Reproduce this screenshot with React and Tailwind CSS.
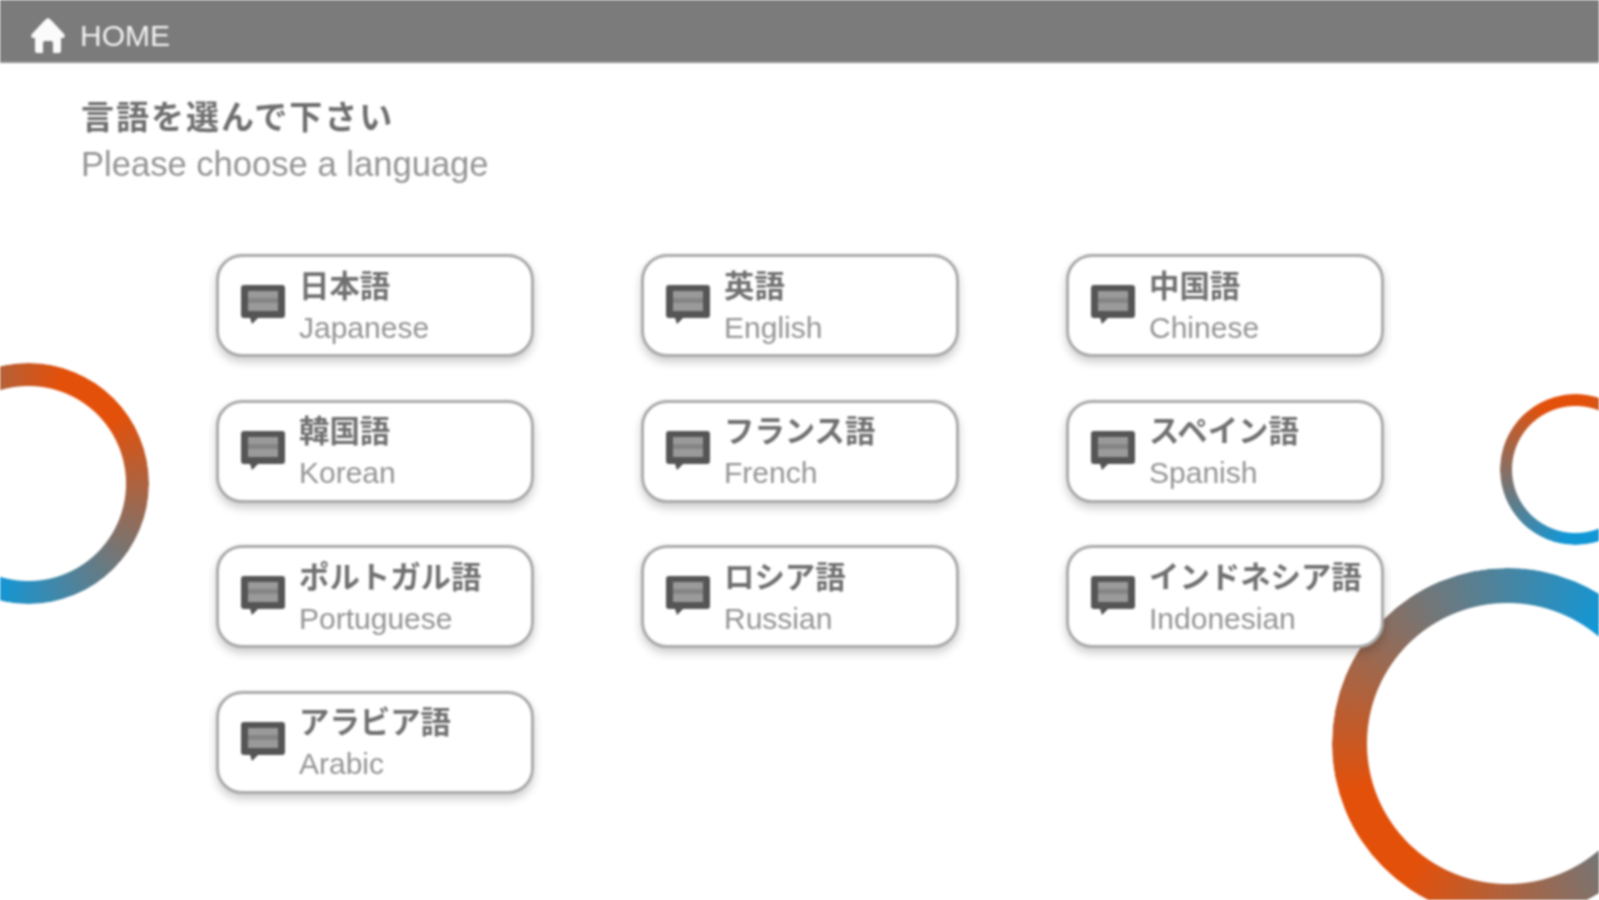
const languages = [
  { ja: '日本語', en: 'Japanese' },
  { ja: '英語', en: 'English' },
  { ja: '中国語', en: 'Chinese' },
  { ja: '韓国語', en: 'Korean' },
  { ja: 'フランス語', en: 'French' },
  { ja: 'スペイン語', en: 'Spanish' },
  { ja: 'ポルトガル語', en: 'Portuguese' },
  { ja: 'ロシア語', en: 'Russian' },
  { ja: 'インドネシア語', en: 'Indonesian' },
  { ja: 'アラビア語', en: 'Arabic' },
]

const font = 'font-["Liberation_Sans","Noto_Sans_CJK_JP",sans-serif]'

const HomeIcon = () => (
  <svg viewBox="0 0 34 36" className="w-[34px] h-[36px] shrink-0">
    <path
      d="M17 0 Q19 1 21 3 L33 16 Q35 19 32 20 L30 20 L30 33 Q30 35 28 35 L22 35 L22 25 Q22 23 20 23 L14 23 Q12 23 12 25 L12 35 L6 35 Q4 35 4 33 L4 20 L2 20 Q-1 19 1 16 L13 3 Q15 1 17 0 Z"
      fill="#fbfbfb"
    />
  </svg>
)

const BubbleIcon = () => (
  <svg viewBox="0 0 44 40" className="w-[44px] h-[40px] shrink-0">
    <path
      d="M3 1 H41 Q44 1 44 4 V31 Q44 34 41 34 H17 L11 40 L9 34 H3 Q0 34 0 31 V4 Q0 1 3 1 Z"
      fill="#555555"
    />
    <rect x="7" y="7" width="30" height="20" fill="#9a9a9a" />
    <rect x="7" y="14" width="30" height="5" fill="#858585" />
  </svg>
)

const LanguageCard = ({ ja, en }) => (
  <div className="relative z-10 h-[103px] flex items-center bg-white border-[3px] border-[#ababab] rounded-[26px] shadow-[0_5px_10px_rgba(0,0,0,0.2)] pl-[22px]">
    <div className="mr-[14px] mt-[-3px]">
      <BubbleIcon />
    </div>
    <div className="flex flex-col whitespace-nowrap mt-[2px]">
      <div className="text-[30.4px] leading-[38px] font-bold text-[#707070]">{ja}</div>
      <div className="text-[30px] leading-[38px] mt-[4px] text-[#949494]">{en}</div>
    </div>
  </div>
)

const Ring = ({ className }) => <div className={`absolute rounded-full ${className}`} />

export default () => {
  return (
    <div className={`relative w-[1599px] h-[900px] overflow-hidden bg-white blur-[1px] ${font}`}>
      <div className="h-[63px] flex items-center bg-[#7a7b7a] border-b-2 border-[#8f8f8f] pl-[31px] pt-[11px]">
        <HomeIcon />
        <span className="ml-[15px] text-[30px] leading-none text-[#f2f2f2]">HOME</span>
      </div>

      <div className="pl-[81px] pt-[33px]">
        <h1 className="text-[33px] leading-[44px] font-bold tracking-[2px] text-[#6e6e6e]">言語を選んで下さい</h1>
        <p className="text-[34.6px] leading-[44px] mt-[2px] text-[#949494]">Please choose a language</p>
      </div>

      <div className="grid grid-cols-[318px_318px_318px] gap-x-[107px] gap-y-[42.5px] pl-[216px] pt-[68px]">
        {languages.map(l => (
          <LanguageCard key={l.en} ja={l.ja} en={l.en} />
        ))}
      </div>

      <Ring className="left-[-92px] top-[363px] w-[241px] h-[241px] bg-[conic-gradient(from_35deg,#e3500a_0%,#e3500a_5%,#1297d6_45%,#1297d6_55%,#e3500a_95%)] [mask-image:radial-gradient(circle,transparent_97px,black_98px)]" />
      <Ring className="left-[1500px] top-[394px] w-[151px] h-[151px] bg-[conic-gradient(from_350deg,#e3500a_0%,#e3500a_5%,#1297d6_45%,#1297d6_55%,#e3500a_95%)] [mask-image:radial-gradient(circle,transparent_63px,black_64px)]" />
      <Ring className="left-[1332px] top-[568px] w-[351px] h-[351px] bg-[conic-gradient(from_235deg,#e3500a_0%,#e3500a_5%,#1297d6_45%,#1297d6_55%,#e3500a_95%)] [mask-image:radial-gradient(circle,transparent_140px,black_141px)]" />
    </div>
  )
}
